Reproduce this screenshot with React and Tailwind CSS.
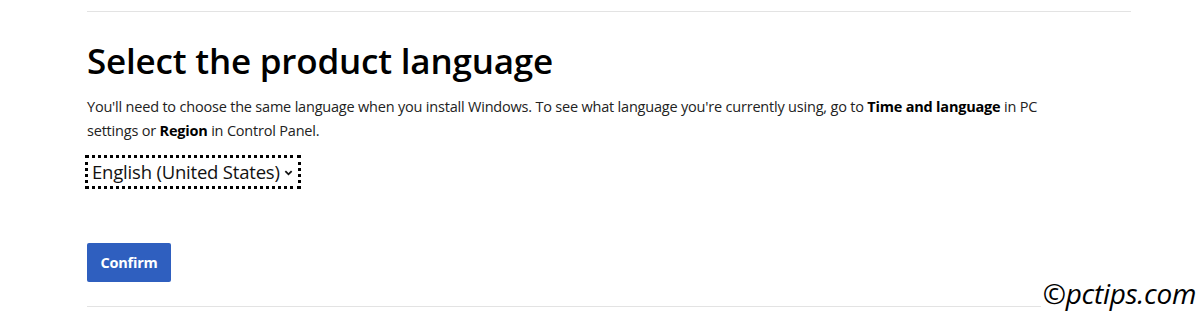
import React from "react";

export default function App() {
  return (
    <div className="relative w-[1200px] h-[314px] bg-white overflow-hidden font-['Open_Sans',sans-serif] text-[#1a1a1a]">
      <div className="ml-[87px] w-[1044px] pt-[11px]">
        <div className="border-t border-[#e3e3e3]" />
        <h1 className="mt-[28px] text-[35px] leading-[42px] font-semibold tracking-[-0.2px] text-black">
          Select the product language
        </h1>
        <p className="mt-[13px] text-[14.5px] leading-[24px] tracking-[-0.2px] text-[#222]">
          You'll need to choose the same language when you install Windows. To see what language you're currently using, go to{" "}
          <b className="font-bold text-black">Time and language</b> in PC
          <br />
          settings or <b className="font-bold text-black">Region</b> in Control Panel.
        </p>
        <div className="mt-[12px] -ml-[2px] inline-flex items-center h-[34px] border-[3px] border-dotted border-black pl-[4px] pr-[5px]">
          <span className="text-[18.5px] leading-none tracking-[-0.2px] text-[#111]">English (United States)</span>
          <svg className="ml-[4px] w-[9px] h-[9px]" viewBox="0 0 10 10">
            <path d="M1.5 3.5 L5 7 L8.5 3.5" fill="none" stroke="#111" strokeWidth="2" />
          </svg>
        </div>
        <div className="mt-[54px]">
          <button className="w-[84px] h-[39px] rounded-[2px] bg-[#2f5fbf] text-white text-[14.5px] font-bold tracking-[-0.2px]">
            Confirm
          </button>
        </div>
        <div className="mt-[24px] border-t border-[#e3e3e3]" />
      </div>
      <div className="absolute right-[2px] bottom-[7px] bg-white px-[2px] text-[28px] leading-none italic text-black font-['Open_Sans',sans-serif] tracking-[-0.3px]">
        ©pctips.com
      </div>
    </div>
  );
}
